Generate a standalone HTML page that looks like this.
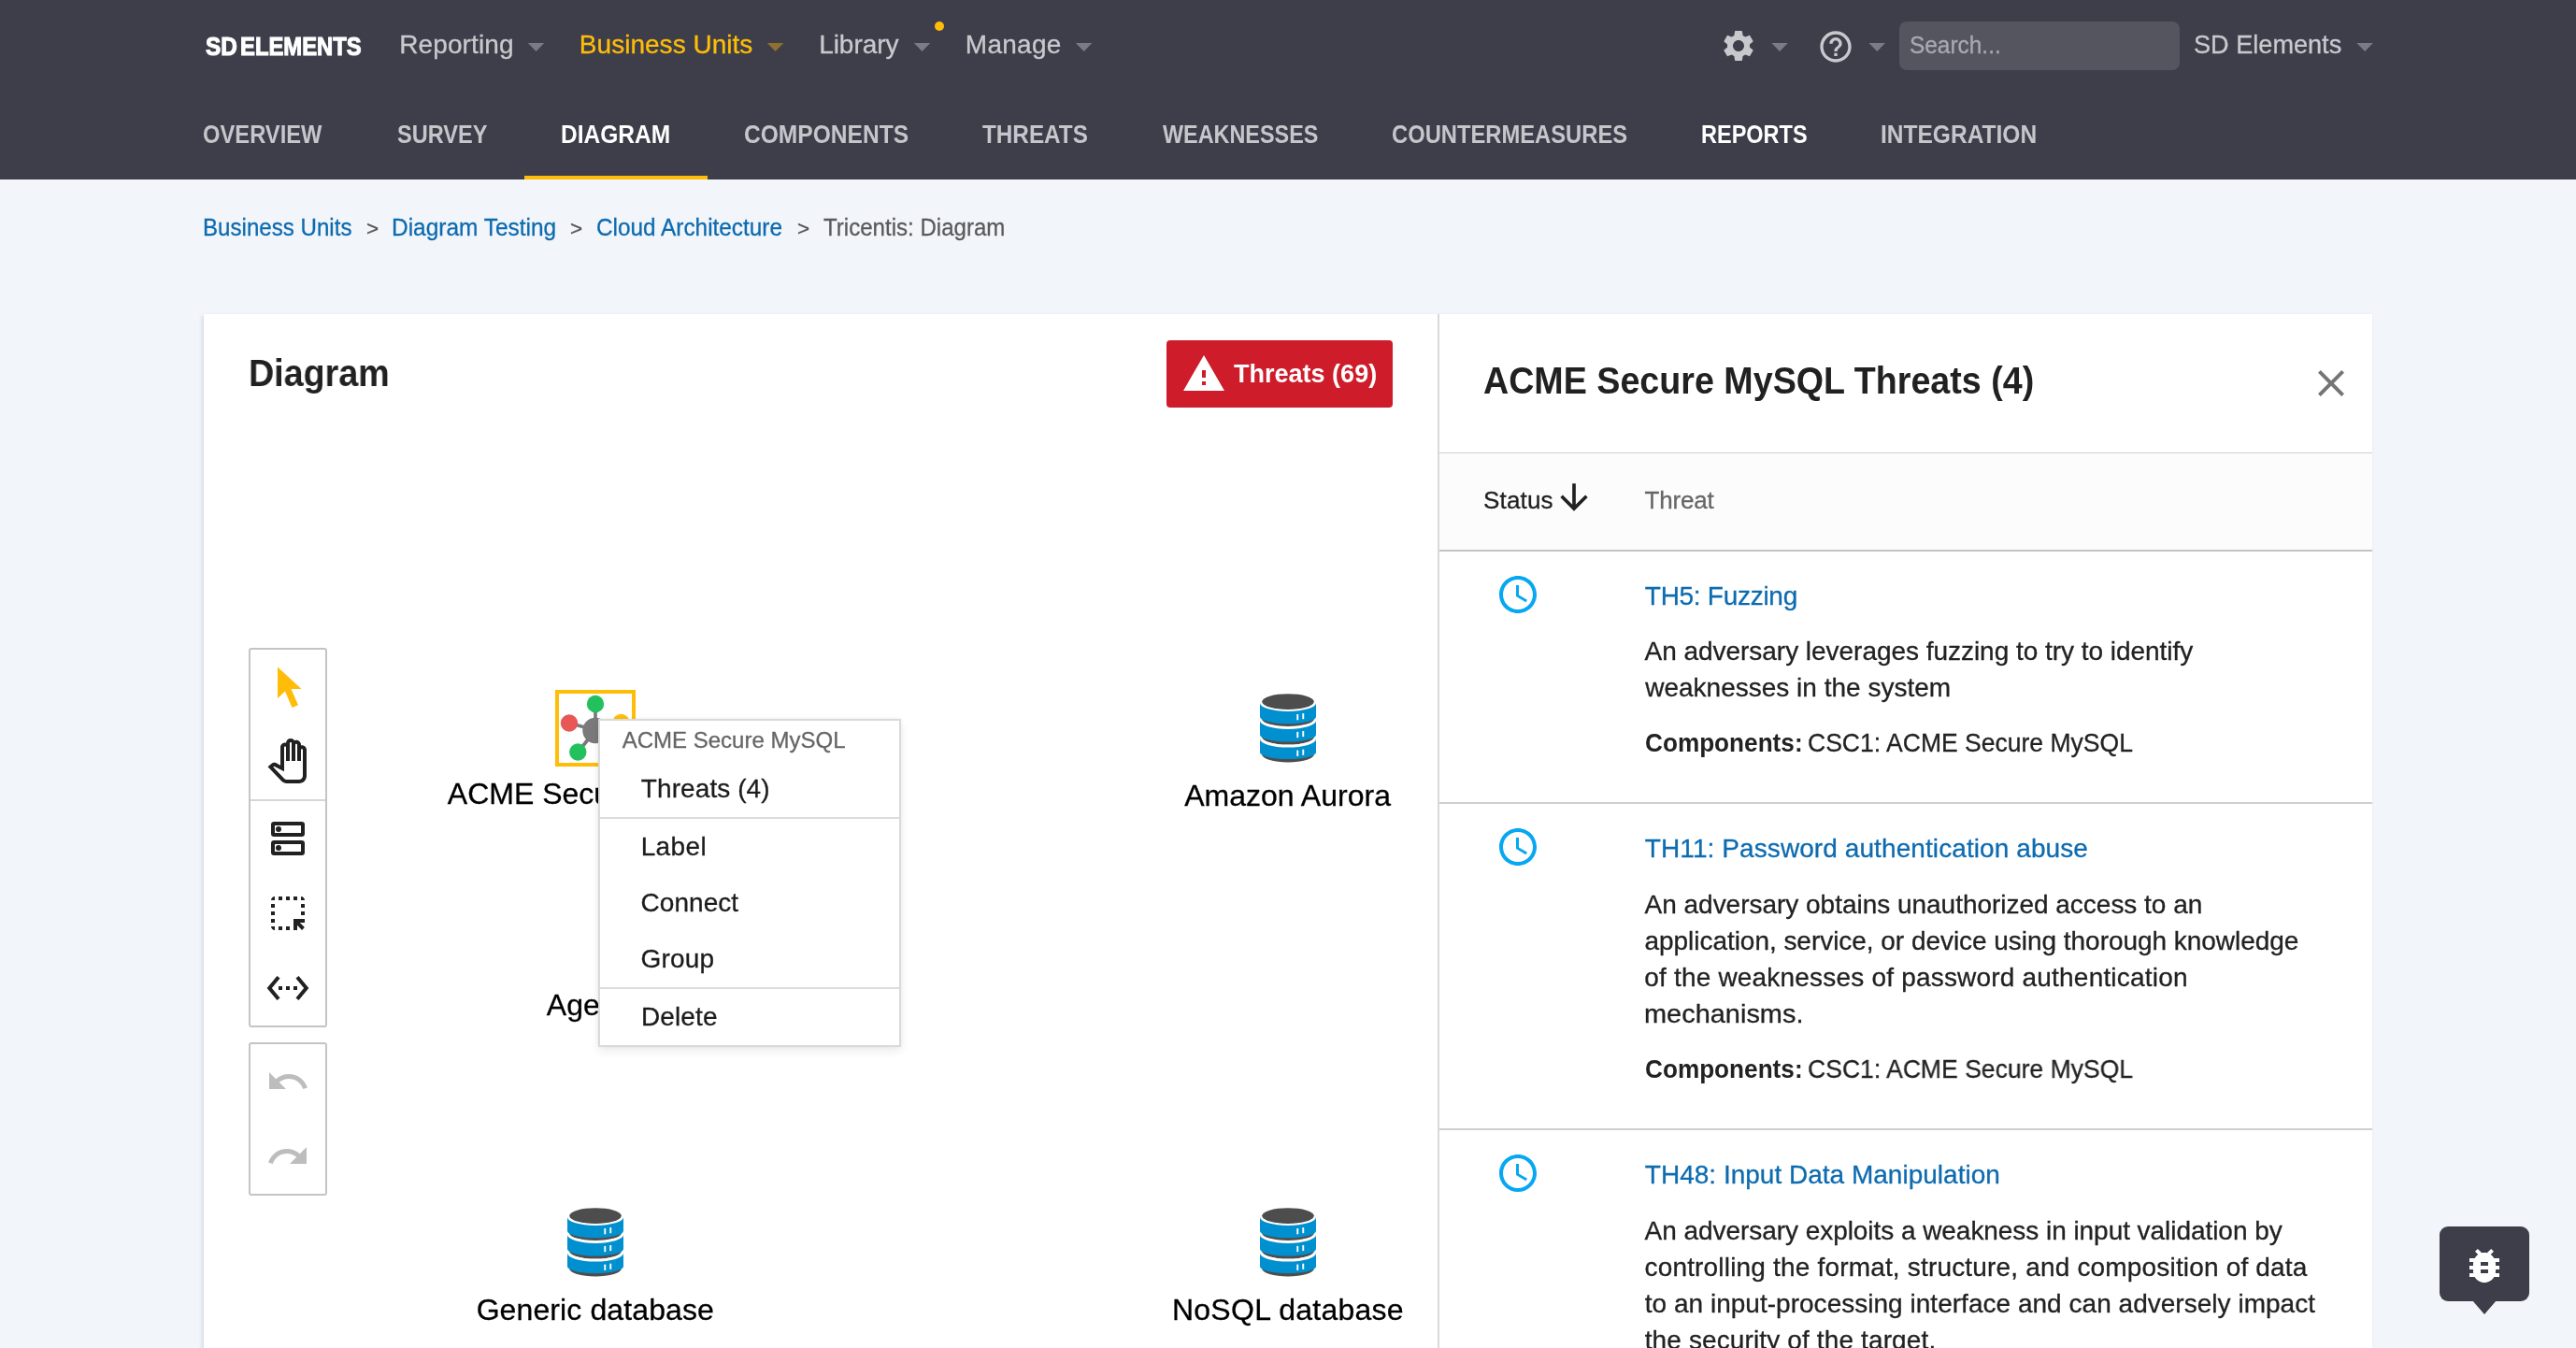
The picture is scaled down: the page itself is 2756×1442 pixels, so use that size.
<!DOCTYPE html>
<html lang="en">
<head>
<meta charset="utf-8">
<title>Tricentis: Diagram - SD Elements</title>
<style>
html,body{margin:0;padding:0;}
body{width:2756px;height:1442px;overflow:hidden;position:relative;background:#f2f5fa;font-family:"Liberation Sans",sans-serif;}
.abs{position:absolute;}
.t{position:absolute;white-space:nowrap;display:block;transform-origin:0 50%;}
.nav{left:0;top:0;width:2756px;height:192px;background:#3e3e4b;}
.panel{left:218px;top:336px;width:2320px;height:1120px;background:#fff;box-shadow:0 0 3px rgba(70,85,120,.07),-3px 2px 3px rgba(70,85,120,.10);}
.tb{position:absolute;left:266px;width:80px;border:2px solid #c4c4c4;border-radius:3px;background:#fff;}
.menu{left:640px;top:768.500px;width:319.700px;height:347.300px;background:#fff;border:2px solid #dadada;box-shadow:0 5px 10px rgba(0,0,0,.07),0 0 4px rgba(0,0,0,.07);}
.logo{-webkit-text-stroke:1.1px #fff;}
.rb,.dl{-webkit-text-stroke:.3px currentColor;}
svg{position:absolute;overflow:visible;}
</style>
</head>
<body>
<div id="root" style="position:absolute;left:0;top:0;width:2756px;height:1442px;overflow:hidden;will-change:transform">
<div class="abs nav"></div>
<!-- nav carets -->
<svg style="left:0;top:0" width="2756" height="100" viewBox="0 0 2756 100"><polygon fill="#7a7a88" points="564.8,46 582.3,46 573.55,55"/><polygon fill="#8f7030" points="820.8,46 838.3,46 829.55,55"/><polygon fill="#7a7a88" points="977.8,46 995.3,46 986.55,55"/><polygon fill="#7a7a88" points="1150.9,46 1168.4,46 1159.65,55"/><polygon fill="#7a7a88" points="1895.3,46 1912.8,46 1904.05,55"/><polygon fill="#7a7a88" points="1999.5,46 2017.0,46 2008.25,55"/><polygon fill="#7a7a88" points="2521.4,46 2538.9,46 2530.15,55"/></svg>
<div class="abs" style="left:1000px;top:23px;width:10px;height:10px;border-radius:50%;background:#ffbd09"></div>
<!-- gear -->
<svg style="left:1840px;top:29.200px" width="40" height="40" viewBox="0 0 24 24"><path fill="#c9c9cd" d="M19.14 12.94c.04-.3.06-.61.06-.94 0-.32-.02-.64-.07-.94l2.03-1.58c.18-.14.23-.41.12-.61l-1.92-3.32c-.12-.22-.37-.29-.59-.22l-2.39.96c-.5-.38-1.03-.7-1.62-.94l-.36-2.54c-.04-.24-.24-.41-.48-.41h-3.84c-.24 0-.43.17-.47.41l-.36 2.54c-.59.24-1.13.57-1.62.94l-2.39-.96c-.22-.08-.47 0-.59.22L2.74 8.87c-.12.21-.08.47.12.61l2.03 1.58c-.05.3-.09.63-.09.94s.02.64.07.94l-2.03 1.58c-.18.14-.23.41-.12.61l1.92 3.32c.12.22.37.29.59.22l2.39-.96c.5.38 1.03.7 1.62.94l.36 2.54c.05.24.24.41.48.41h3.84c.24 0 .44-.17.47-.41l.36-2.54c.59-.24 1.13-.56 1.62-.94l2.39.96c.22.08.47 0 .59-.22l1.92-3.32c.12-.22.07-.47-.12-.61l-2.01-1.58zM12 15.6c-1.98 0-3.6-1.62-3.6-3.6s1.62-3.6 3.6-3.6 3.6 1.62 3.6 3.6-1.62 3.6-3.6 3.6z"/></svg>
<!-- help -->
<svg style="left:1944px;top:30px" width="40" height="40" viewBox="0 0 24 24"><path fill="#c9c9cd" d="M11 18h2v-2h-2v2zm1-16C6.48 2 2 6.48 2 12s4.48 10 10 10 10-4.480 10-10S17.520 2 12 2zm0 18c-4.410 0-8-3.590-8-8s3.590-8 8-8 8 3.590 8 8-3.590 8-8 8zm0-14c-2.210 0-4 1.790-4 4h2c0-1.100.9-2 2-2s2 .9 2 2c0 2-3 1.750-3 5h2c0-2.250 3-2.500 3-5 0-2.210-1.790-4-4-4z"/></svg>
<!-- search -->
<div class="abs" style="left:2032px;top:23px;width:300px;height:52px;border-radius:8px;background:#55555f"></div>
<!-- active tab underline -->
<div class="abs" style="left:561px;top:188px;width:196px;height:4px;background:#ffbd09"></div>

<!-- main panel -->
<div class="abs panel"></div>
<div class="abs" style="left:1538px;top:336px;width:2px;height:1120px;background:#d9d9d9"></div>
<!-- threats button -->
<div class="abs" style="left:1248px;top:364px;width:242px;height:72px;border-radius:4px;background:#cf1c2b"></div>
<svg style="left:1264px;top:376px" width="48" height="48" viewBox="0 0 24 24"><path fill="#fff" d="M1 21h22L12 2 1 21zm12-3h-2v-2h2v2zm0-4h-2v-4h2v4z"/></svg>
<!-- close -->
<svg style="left:2470px;top:386px" width="48" height="48" viewBox="0 0 24 24"><path fill="#757575" d="M19 6.41L17.59 5 12 10.59 6.41 5 5 6.41 10.59 12 5 17.59 6.41 19 12 13.41 17.59 19 19 17.59 13.41 12z"/></svg>
<!-- table header -->
<div class="abs" style="left:1540px;top:484px;width:998px;height:106px;background:#fcfcfc;border-top:1px solid #cfcfcf;border-bottom:2px solid #c4c4c4;box-sizing:border-box"></div>
<svg style="left:1661.900px;top:509.800px" width="44" height="44" viewBox="0 0 24 24"><path fill="#212121" d="M20 12l-1.410-1.410L13 16.170V4h-2v12.170l-5.580-5.590L4 12l8 8 8-8z"/></svg>
<!-- row separators -->
<div class="abs" style="left:1540px;top:858px;width:998px;height:2px;background:#cfcfcf"></div>
<div class="abs" style="left:1540px;top:1207px;width:998px;height:2px;background:#cfcfcf"></div>
<!-- clocks -->
<svg style="left:1600px;top:612px" width="48" height="48" viewBox="0 0 24 24"><path fill="#07a7f1" d="M11.990 2C6.470 2 2 6.480 2 12s4.470 10 9.990 10C17.520 22 22 17.520 22 12S17.520 2 11.990 2zM12 20c-4.420 0-8-3.580-8-8s3.580-8 8-8 8 3.580 8 8-3.580 8-8 8zm.5-13H11v6l5.250 3.150.750-1.230-4.500-2.670z"/></svg>
<svg style="left:1600px;top:882px" width="48" height="48" viewBox="0 0 24 24"><path fill="#07a7f1" d="M11.990 2C6.470 2 2 6.480 2 12s4.470 10 9.990 10C17.520 22 22 17.520 22 12S17.520 2 11.990 2zM12 20c-4.420 0-8-3.580-8-8s3.580-8 8-8 8 3.580 8 8-3.580 8-8 8zm.5-13H11v6l5.250 3.150.750-1.230-4.500-2.670z"/></svg>
<svg style="left:1600px;top:1231px" width="48" height="48" viewBox="0 0 24 24"><path fill="#07a7f1" d="M11.990 2C6.470 2 2 6.480 2 12s4.470 10 9.990 10C17.520 22 22 17.520 22 12S17.520 2 11.990 2zM12 20c-4.420 0-8-3.580-8-8s3.580-8 8-8 8 3.580 8 8-3.580 8-8 8zm.5-13H11v6l5.250 3.150.750-1.230-4.500-2.670z"/></svg>

<!-- toolbars -->
<div class="tb" style="top:693px;height:402px"></div>
<div class="abs" style="left:268px;top:855px;width:80px;height:2px;background:#d6d6d6"></div>
<div class="tb" style="top:1115px;height:160px"></div>
<!-- cursor -->
<svg style="left:284px;top:710px" width="48" height="48" viewBox="0 0 48 48"><path fill="#ffbd09" d="M13 3.500 L13 37 L21 29.500 L28.500 47 L35 44.200 L27.500 27 L38.500 27 Z"/></svg>
<!-- hand -->
<svg style="left:284px;top:790px" width="48" height="48" viewBox="0 0 24 24"><path fill="#212121" d="M18 24h-6.550c-1.080 0-2.140-.450-2.890-1.230l-7.300-7.610 2.070-1.830c.620-.550 1.530-.660 2.260-.270L8 14.340V4.790c0-1.380 1.120-2.500 2.500-2.500.170 0 .340.020.510.050.09-1.300 1.170-2.330 2.490-2.330.860 0 1.610.430 2.060 1.090.290-.120.610-.180.940-.180 1.380 0 2.500 1.120 2.500 2.500v.280c.160-.030.330-.050.500-.050 1.380 0 2.500 1.120 2.500 2.500V20c0 2.210-1.790 4-4 4zM4.140 15.280l5.860 6.100c.380.390.9.620 1.440.620H18c1.100 0 2-.9 2-2V6.150c0-.280-.220-.5-.5-.5s-.5.220-.5.500V12h-2V3.420c0-.280-.220-.5-.5-.5s-.5.220-.5.500V12h-2V2.510c0-.280-.220-.5-.5-.5s-.5.220-.5.500V12h-2V4.790c0-.280-.220-.5-.5-.5s-.5.230-.5.500v12.870l-5.350-2.830-.510.450z"/></svg>
<!-- dns -->
<svg style="left:284px;top:873px" width="48" height="48" viewBox="0 0 24 24"><g fill="none" stroke="#212121" stroke-width="2"><rect x="4" y="4" width="16" height="6" rx=".6"/><rect x="4" y="14" width="16" height="6" rx=".6"/></g><circle cx="7" cy="7" r="1.500" fill="#212121"/><circle cx="7" cy="17" r="1.500" fill="#212121"/></svg>
<!-- select -->
<svg style="left:284px;top:953px" width="48" height="48" viewBox="0 0 24 24"><g fill="#212121"><path d="M3 5c0-1.100.9-2 2-2v2H3zm4-2h2v2H7zm4 0h2v2h-2zm4 0h2v2h-2zm4 0c1.100 0 2 .9 2 2h-2zM3 7h2v2H3zm0 4h2v2H3zm0 4h2v2H3zm0 4h2v2c-1.100 0-2-.9-2-2zm4 0h2v2H7zm4 0h2v2h-2zM19 7h2v2h-2zm0 4h2v2h-2z"/><path d="M15 15H21V17H18.410L20.950 19.540L19.540 20.950L17 18.410V21H15Z"/></g></svg>
<!-- ethernet -->
<svg style="left:284px;top:1033px" width="48" height="48" viewBox="0 0 24 24"><path fill="#212121" d="M7.770 6.760L6.230 5.480.820 12l5.410 6.520 1.540-1.280L3.420 12l4.350-5.240zM7 13h2v-2H7v2zm10-2h-2v2h2v-2zm-6 2h2v-2h-2v2zm6.770-7.520l-1.540 1.280L20.580 12l-4.350 5.240 1.540 1.280L23.180 12l-5.410-6.520z"/></svg>
<!-- undo / redo -->
<svg style="left:284px;top:1133px" width="48" height="48" viewBox="0 0 24 24"><path fill="#bdbdbd" d="M12.500 8c-2.650 0-5.050.99-6.900 2.600L2 7v9h9l-3.620-3.620c1.390-1.160 3.160-1.880 5.120-1.880 3.540 0 6.550 2.310 7.600 5.500l2.370-.780C21.080 11.030 17.150 8 12.500 8z"/></svg>
<svg style="left:284px;top:1213px" width="48" height="48" viewBox="0 0 24 24"><path fill="#bdbdbd" d="M18.400 10.600C16.550 8.990 14.150 8 11.500 8c-4.650 0-8.580 3.030-9.960 7.220L3.900 16c1.050-3.190 4.050-5.500 7.600-5.500 1.950 0 3.730.720 5.120 1.880L13 16h9V7l-3.600 3.600z"/></svg>

<!-- ACME node -->
<div class="abs" style="left:594px;top:738px;width:78px;height:74px;border:4px solid #ffbd09"></div>
<svg style="left:594px;top:738px" width="86" height="82" viewBox="0 0 86 82"><g stroke="#7a7a7a" stroke-width="3.700"><line x1="43" y1="43" x2="43" y2="15"/><line x1="43" y1="43" x2="15" y2="35.500"/><line x1="43" y1="43" x2="24.500" y2="66.500"/><line x1="43" y1="43" x2="70.500" y2="35"/></g><circle cx="43" cy="43.500" r="13.700" fill="#7a7a7a"/><circle cx="43" cy="15" r="9.200" fill="#23c15e"/><circle cx="15" cy="35.500" r="9.200" fill="#e85656"/><circle cx="24.300" cy="66.500" r="9.200" fill="#23c15e"/><circle cx="70.500" cy="35" r="9.200" fill="#ffbd09"/></svg>

<!-- db icons -->
<svg style="left:1347.8px;top:741.5px" width="60" height="76" viewBox="0 0 60 76"><path fill="#4d4d4d" d="M2.200,21.85 L57.800,21.85 L57.800,27.05 A27.800,8.500 0 0 1 2.200,27.05 Z"/><path fill="#0090cf" d="M0,10.00 A30,9 0 0 0 60,10.00 L60,24.85 A30,7.400 0 0 1 0,24.85 Z"/><rect x="39.300" y="22.00" width="1.900" height="6.300" fill="#fff"/><rect x="45.300" y="21.10" width="1.900" height="6.100" fill="#fff"/><path fill="#fff" d="M-.5,25.90 A30.500,9 0 0 0 60.500,25.90 L60.500,29.90 A30.500,9 0 0 1 -.5,29.90 Z"/><path fill="#4d4d4d" d="M2.200,41.10 L57.800,41.10 L57.800,46.30 A27.800,8.500 0 0 1 2.200,46.30 Z"/><path fill="#0090cf" d="M0,28.90 A30,9 0 0 0 60,28.90 L60,44.10 A30,7.400 0 0 1 0,44.10 Z"/><rect x="39.300" y="40.90" width="1.900" height="6.300" fill="#fff"/><rect x="45.300" y="40.00" width="1.900" height="6.100" fill="#fff"/><path fill="#fff" d="M-.5,45.60 A30.500,9 0 0 0 60.500,45.60 L60.500,49.60 A30.500,9 0 0 1 -.5,49.60 Z"/><path fill="#4d4d4d" d="M2.200,59.70 L57.800,59.70 L57.800,64.90 A27.800,8.500 0 0 1 2.200,64.90 Z"/><path fill="#0090cf" d="M0,48.60 A30,9 0 0 0 60,48.60 L60,62.70 A30,7.400 0 0 1 0,62.70 Z"/><rect x="39.300" y="60.60" width="1.900" height="6.300" fill="#fff"/><rect x="45.300" y="59.70" width="1.900" height="6.100" fill="#fff"/><ellipse cx="30" cy="8.600" rx="27.800" ry="8.400" fill="#4d4d4d"/></svg>
<svg style="left:606.7px;top:1291.7px" width="60" height="76" viewBox="0 0 60 76"><path fill="#4d4d4d" d="M2.200,21.85 L57.800,21.85 L57.800,27.05 A27.800,8.500 0 0 1 2.200,27.05 Z"/><path fill="#0090cf" d="M0,10.00 A30,9 0 0 0 60,10.00 L60,24.85 A30,7.400 0 0 1 0,24.85 Z"/><rect x="39.300" y="22.00" width="1.900" height="6.300" fill="#fff"/><rect x="45.300" y="21.10" width="1.900" height="6.100" fill="#fff"/><path fill="#fff" d="M-.5,25.90 A30.500,9 0 0 0 60.500,25.90 L60.500,29.90 A30.500,9 0 0 1 -.5,29.90 Z"/><path fill="#4d4d4d" d="M2.200,41.10 L57.800,41.10 L57.800,46.30 A27.800,8.500 0 0 1 2.200,46.30 Z"/><path fill="#0090cf" d="M0,28.90 A30,9 0 0 0 60,28.90 L60,44.10 A30,7.400 0 0 1 0,44.10 Z"/><rect x="39.300" y="40.90" width="1.900" height="6.300" fill="#fff"/><rect x="45.300" y="40.00" width="1.900" height="6.100" fill="#fff"/><path fill="#fff" d="M-.5,45.60 A30.500,9 0 0 0 60.500,45.60 L60.500,49.60 A30.500,9 0 0 1 -.5,49.60 Z"/><path fill="#4d4d4d" d="M2.200,59.70 L57.800,59.70 L57.800,64.90 A27.800,8.500 0 0 1 2.200,64.90 Z"/><path fill="#0090cf" d="M0,48.60 A30,9 0 0 0 60,48.60 L60,62.70 A30,7.400 0 0 1 0,62.70 Z"/><rect x="39.300" y="60.60" width="1.900" height="6.300" fill="#fff"/><rect x="45.300" y="59.70" width="1.900" height="6.100" fill="#fff"/><ellipse cx="30" cy="8.600" rx="27.800" ry="8.400" fill="#4d4d4d"/></svg>
<svg style="left:1347.8px;top:1291.7px" width="60" height="76" viewBox="0 0 60 76"><path fill="#4d4d4d" d="M2.200,21.85 L57.800,21.85 L57.800,27.05 A27.800,8.500 0 0 1 2.200,27.05 Z"/><path fill="#0090cf" d="M0,10.00 A30,9 0 0 0 60,10.00 L60,24.85 A30,7.400 0 0 1 0,24.85 Z"/><rect x="39.300" y="22.00" width="1.900" height="6.300" fill="#fff"/><rect x="45.300" y="21.10" width="1.900" height="6.100" fill="#fff"/><path fill="#fff" d="M-.5,25.90 A30.500,9 0 0 0 60.500,25.90 L60.500,29.90 A30.500,9 0 0 1 -.5,29.90 Z"/><path fill="#4d4d4d" d="M2.200,41.10 L57.800,41.10 L57.800,46.30 A27.800,8.500 0 0 1 2.200,46.30 Z"/><path fill="#0090cf" d="M0,28.90 A30,9 0 0 0 60,28.90 L60,44.10 A30,7.400 0 0 1 0,44.10 Z"/><rect x="39.300" y="40.90" width="1.900" height="6.300" fill="#fff"/><rect x="45.300" y="40.00" width="1.900" height="6.100" fill="#fff"/><path fill="#fff" d="M-.5,45.60 A30.500,9 0 0 0 60.500,45.60 L60.500,49.60 A30.500,9 0 0 1 -.5,49.60 Z"/><path fill="#4d4d4d" d="M2.200,59.70 L57.800,59.70 L57.800,64.90 A27.800,8.500 0 0 1 2.200,64.90 Z"/><path fill="#0090cf" d="M0,48.60 A30,9 0 0 0 60,48.60 L60,62.70 A30,7.400 0 0 1 0,62.70 Z"/><rect x="39.300" y="60.60" width="1.900" height="6.300" fill="#fff"/><rect x="45.300" y="59.70" width="1.900" height="6.100" fill="#fff"/><ellipse cx="30" cy="8.600" rx="27.800" ry="8.400" fill="#4d4d4d"/></svg>

<span class="t logo" style="left:219.61px;top:36px;font-size:27.5px;line-height:27.5px;color:#ffffff;font-weight:700;transform:scaleX(0.8868);">SD</span>
<span class="t logo" style="left:257.11px;top:36px;font-size:27.5px;line-height:27.5px;color:#ffffff;font-weight:700;transform:scaleX(0.8658);">ELEMENTS</span>
<span class="t rb" style="left:427.17px;top:34px;font-size:28px;line-height:28px;color:#c9c9cd;letter-spacing:0.130px;">Reporting</span>
<span class="t rb" style="left:619.87px;top:34px;font-size:28px;line-height:28px;color:#ffbd09;letter-spacing:0.025px;">Business Units</span>
<span class="t rb" style="left:876.17px;top:34px;font-size:28px;line-height:28px;color:#c9c9cd;letter-spacing:-0.038px;">Library</span>
<span class="t rb" style="left:1032.87px;top:34px;font-size:28px;line-height:28px;color:#c9c9cd;letter-spacing:0.244px;">Manage</span>
<span class="t rb" style="left:2043.31px;top:35px;font-size:26px;line-height:26px;color:#a9a9b0;transform:scaleX(0.9389);">Search...</span>
<span class="t rb" style="left:2347.48px;top:34px;font-size:28px;line-height:28px;color:#c9c9cd;transform:scaleX(0.9683);">SD Elements</span>
<span class="t" style="left:217.37px;top:131px;font-size:27px;line-height:27px;color:#c6c6ca;font-weight:700;transform:scaleX(0.8793);">OVERVIEW</span>
<span class="t" style="left:424.67px;top:131px;font-size:27px;line-height:27px;color:#c6c6ca;font-weight:700;transform:scaleX(0.8719);">SURVEY</span>
<span class="t" style="left:599.94px;top:131px;font-size:27px;line-height:27px;color:#ffffff;font-weight:700;transform:scaleX(0.9082);">DIAGRAM</span>
<span class="t" style="left:795.64px;top:131px;font-size:27px;line-height:27px;color:#c6c6ca;font-weight:700;transform:scaleX(0.9103);">COMPONENTS</span>
<span class="t" style="left:1051.37px;top:131px;font-size:27px;line-height:27px;color:#c6c6ca;font-weight:700;transform:scaleX(0.8994);">THREATS</span>
<span class="t" style="left:1243.68px;top:131px;font-size:27px;line-height:27px;color:#c6c6ca;font-weight:700;transform:scaleX(0.8665);">WEAKNESSES</span>
<span class="t" style="left:1489.17px;top:131px;font-size:27px;line-height:27px;color:#c6c6ca;font-weight:700;transform:scaleX(0.8798);">COUNTERMEASURES</span>
<span class="t" style="left:1819.69px;top:131px;font-size:27px;line-height:27px;color:#ffffff;font-weight:700;transform:scaleX(0.8702);">REPORTS</span>
<span class="t" style="left:2011.74px;top:131px;font-size:27px;line-height:27px;color:#c6c6ca;font-weight:700;transform:scaleX(0.9085);">INTEGRATION</span>
<span class="t rb" style="left:216.73px;top:230px;font-size:26px;line-height:26px;color:#0d6bb0;transform:scaleX(0.9273);">Business Units</span>
<span class="t rb" style="left:392.07px;top:234px;font-size:22px;line-height:22px;color:#555;transform:scaleX(1.0222);">&gt;</span>
<span class="t rb" style="left:419.41px;top:230px;font-size:26px;line-height:26px;color:#0d6bb0;transform:scaleX(0.9401);">Diagram Testing</span>
<span class="t rb" style="left:610.37px;top:234px;font-size:22px;line-height:22px;color:#555;transform:scaleX(1.0222);">&gt;</span>
<span class="t rb" style="left:638.35px;top:230px;font-size:26px;line-height:26px;color:#0d6bb0;transform:scaleX(0.9367);">Cloud Architecture</span>
<span class="t rb" style="left:852.87px;top:234px;font-size:22px;line-height:22px;color:#555;transform:scaleX(1.0222);">&gt;</span>
<span class="t rb" style="left:881.29px;top:230px;font-size:26px;line-height:26px;color:#5a5a5a;transform:scaleX(0.9259);">Tricentis: Diagram</span>
<span class="t" style="left:265.83px;top:379px;font-size:41px;line-height:41px;color:#212121;font-weight:700;transform:scaleX(0.9190);">Diagram</span>
<span class="t" style="left:1320.24px;top:386px;font-size:28px;line-height:28px;color:#ffffff;font-weight:700;transform:scaleX(0.9651);">Threats (69)</span>
<span class="t" style="left:1587.29px;top:387px;font-size:41px;line-height:41px;color:#212121;font-weight:700;transform:scaleX(0.9182);">ACME Secure MySQL Threats (4)</span>
<span class="t rb" style="left:1587.05px;top:522px;font-size:26px;line-height:26px;color:#212121;letter-spacing:0.163px;">Status</span>
<span class="t rb" style="left:1759.56px;top:522px;font-size:26px;line-height:26px;color:#666;letter-spacing:-0.173px;">Threat</span>
<span class="t rb" style="left:1759.82px;top:624px;font-size:28px;line-height:28px;color:#0d6bb0;letter-spacing:-0.282px;">TH5: Fuzzing</span>
<span class="t rb" style="left:1759.58px;top:683px;font-size:28px;line-height:28px;color:#222;letter-spacing:-0.035px;">An adversary leverages fuzzing to try to identify</span>
<span class="t rb" style="left:1760.18px;top:722px;font-size:28px;line-height:28px;color:#222;letter-spacing:0.007px;">weaknesses in the system</span>
<span class="t" style="left:1759.61px;top:781px;font-size:28px;line-height:28px;color:#222;font-weight:700;transform:scaleX(0.9344);">Components:</span>
<span class="t rb" style="left:1934.09px;top:781px;font-size:28px;line-height:28px;color:#222;transform:scaleX(0.9475);">CSC1: ACME Secure MySQL</span>
<span class="t rb" style="left:1759.82px;top:894px;font-size:28px;line-height:28px;color:#0d6bb0;letter-spacing:0.088px;">TH11: Password authentication abuse</span>
<span class="t rb" style="left:1759.58px;top:954px;font-size:28px;line-height:28px;color:#222;letter-spacing:-0.022px;">An adversary obtains unauthorized access to an</span>
<span class="t rb" style="left:1759.48px;top:993px;font-size:28px;line-height:28px;color:#222;letter-spacing:-0.038px;">application, service, or device using thorough knowledge</span>
<span class="t rb" style="left:1759.20px;top:1032px;font-size:28px;line-height:28px;color:#222;letter-spacing:0.198px;">of the weaknesses of password authentication</span>
<span class="t rb" style="left:1759.28px;top:1071px;font-size:28px;line-height:28px;color:#222;transform:scaleX(1.0336);">mechanisms.</span>
<span class="t" style="left:1759.61px;top:1130px;font-size:28px;line-height:28px;color:#222;font-weight:700;transform:scaleX(0.9344);">Components:</span>
<span class="t rb" style="left:1934.09px;top:1130px;font-size:28px;line-height:28px;color:#222;transform:scaleX(0.9475);">CSC1: ACME Secure MySQL</span>
<span class="t rb" style="left:1759.82px;top:1243px;font-size:28px;line-height:28px;color:#0d6bb0;letter-spacing:0.008px;">TH48: Input Data Manipulation</span>
<span class="t rb" style="left:1759.58px;top:1303px;font-size:28px;line-height:28px;color:#222;letter-spacing:-0.051px;">An adversary exploits a weakness in input validation by</span>
<span class="t rb" style="left:1759.49px;top:1342px;font-size:28px;line-height:28px;color:#222;letter-spacing:0.177px;">controlling the format, structure, and composition of data</span>
<span class="t rb" style="left:1759.69px;top:1381px;font-size:28px;line-height:28px;color:#222;letter-spacing:0.024px;">to an input-processing interface and can adversely impact</span>
<span class="t rb" style="left:1759.69px;top:1420px;font-size:28px;line-height:28px;color:#222;letter-spacing:0.128px;">the security of the target.</span>
<span class="t dl" style="left:478.85px;top:833px;font-size:32px;line-height:32px;color:#000;">ACME Secure MySQL</span>
<span class="t dl" style="left:584.85px;top:1059px;font-size:32px;line-height:32px;color:#000;">Agent</span>
<span class="t dl" style="left:1267.15px;top:835px;font-size:32px;line-height:32px;color:#000;letter-spacing:0.026px;">Amazon Aurora</span>
<span class="t dl" style="left:509.64px;top:1385px;font-size:32px;line-height:32px;color:#000;letter-spacing:0.107px;">Generic database</span>
<span class="t dl" style="left:1253.94px;top:1385px;font-size:32px;line-height:32px;color:#000;letter-spacing:0.262px;">NoSQL database</span>

<!-- context menu -->
<div class="abs menu"></div>
<div class="abs" style="left:642px;top:874px;width:320px;height:2px;background:#dcdcdc"></div>
<div class="abs" style="left:642px;top:1056px;width:320px;height:2px;background:#dcdcdc"></div>
<span class="t dl" style="left:665.68px;top:780px;font-size:24px;line-height:24px;color:#666;letter-spacing:0.006px;">ACME Secure MySQL</span>
<span class="t dl" style="left:685.84px;top:830px;font-size:28px;line-height:28px;color:#1c1c1c;letter-spacing:0.083px;">Threats (4)</span>
<span class="t dl" style="left:685.64px;top:892px;font-size:28px;line-height:28px;color:#1c1c1c;letter-spacing:0.380px;">Label</span>
<span class="t dl" style="left:685.53px;top:952px;font-size:28px;line-height:28px;color:#1c1c1c;letter-spacing:0.045px;">Connect</span>
<span class="t dl" style="left:685.53px;top:1012px;font-size:28px;line-height:28px;color:#1c1c1c;letter-spacing:0.214px;">Group</span>
<span class="t dl" style="left:685.94px;top:1074px;font-size:28px;line-height:28px;color:#1c1c1c;letter-spacing:0.134px;">Delete</span>

<!-- bug button -->
<div class="abs" style="left:2610px;top:1312px;width:96px;height:80px;border-radius:9px;background:#3e3e4b"></div>
<div class="abs" style="left:2645px;top:1391px;width:0;height:0;border-left:13px solid transparent;border-right:13px solid transparent;border-top:15px solid #3e3e4b"></div>
<svg style="left:2634px;top:1330px" width="48" height="48" viewBox="0 0 24 24"><path fill="#fff" d="M20 8h-2.810c-.450-.780-1.070-1.450-1.820-1.960L17 4.410 15.590 3l-2.170 2.170C12.960 5.060 12.490 5 12 5c-.490 0-.960.060-1.410.170L8.410 3 7 4.410l1.620 1.630C7.880 6.550 7.260 7.220 6.810 8H4v2h2.090c-.050.330-.090.660-.090 1v1H4v2h2v1c0 .340.040.670.090 1H4v2h2.810c1.040 1.790 2.970 3 5.190 3s4.150-1.210 5.190-3H20v-2h-2.090c.050-.330.090-.670.090-1v-1h2v-2h-2v-1c0-.340-.040-.670-.090-1H20V8zm-6 8h-4v-2h4v2zm0-4h-4v-2h4v2z"/></svg>
</div>
</body>
</html>
